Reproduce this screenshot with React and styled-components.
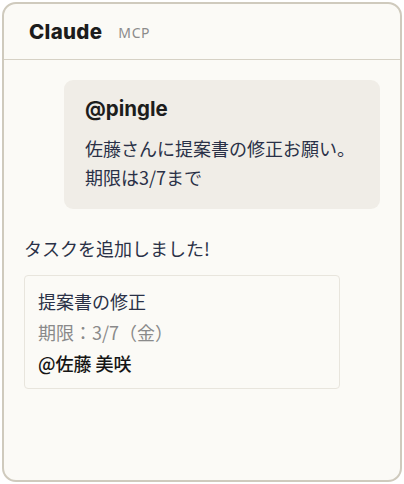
import React from 'react';
import styled, { createGlobalStyle } from 'styled-components';

const GlobalStyle = createGlobalStyle`
  html, body {
    margin: 0;
    padding: 0;
    background: #ffffff;
  }
  body {
    font-family: "Noto Sans CJK JP", "Noto Sans", sans-serif;
  }
`;

const Page = styled.div`
  padding: 2px;
`;

const Frame = styled.div`
  box-sizing: border-box;
  width: 400px;
  height: 480px;
  border: 2px solid #cfcabd;
  border-radius: 14px;
  background: #fbfaf6;
  overflow: hidden;
  display: flex;
  flex-direction: column;
`;

const Header = styled.div`
  height: 55px;
  display: flex;
  align-items: center;
  gap: 16px;
  padding: 0 25px;
  border-bottom: 1px solid #d6d1c5;
`;

const Brand = styled.span`
  font-family: Inter, "Noto Sans", sans-serif;
  font-weight: 800;
  font-size: 20.5px;
  color: #1c1c1c;
  letter-spacing: 0.3px;
`;

const Tag = styled.span`
  font-family: "Noto Sans", sans-serif;
  font-size: 14px;
  color: #8b8b8b;
  letter-spacing: 0.6px;
  padding-top: 2px;
`;

const Body = styled.div`
  display: flex;
  flex-direction: column;
  padding: 20px 20px;
`;

const Bubble = styled.div`
  align-self: flex-end;
  width: 316px;
  box-sizing: border-box;
  background: #f0ede7;
  border-radius: 9px;
  padding: 14px 20px 17px 21px;
`;

const Mention = styled.div`
  font-family: Inter, "Noto Sans", sans-serif;
  font-weight: 700;
  font-size: 20.5px;
  color: #1d1d1d;
  line-height: 30px;
  margin-bottom: 10px;
`;

const Text = styled.div`
  font-size: 18px;
  line-height: ${p => p.tall ? 31 : 29}px;
  white-space: nowrap;
  color: ${p => p.muted ? '#8a8a8a' : p.strong ? '#151515' : '#2a3147'};
  font-weight: ${p => p.strong ? 500 : 400};
`;

const Reply = styled.div`
  margin-top: 25px;
  font-size: 18px;
  line-height: 28px;
  color: #2a3147;
`;

const TaskCard = styled.div`
  margin-top: 13px;
  width: 316px;
  box-sizing: border-box;
  border: 1px solid #e8e5dd;
  border-radius: 4px;
  background: #fbfaf6;
  padding: 10px 13px 9px;
  display: flex;
  flex-direction: column;
`;

export default function App() {
  return (
    <Page>
      <GlobalStyle />
      <Frame>
        <Header>
          <Brand>Claude</Brand>
          <Tag>MCP</Tag>
        </Header>
        <Body>
          <Bubble>
            <Mention>@pingle</Mention>
            <Text>佐藤さんに提案書の修正お願い。</Text>
            <Text>期限は3/7まで</Text>
          </Bubble>
          <Reply>タスクを追加しました!</Reply>
          <TaskCard>
            <Text tall>提案書の修正</Text>
            <Text tall muted>期限：3/7（金）</Text>
            <Text tall strong>@佐藤 美咲</Text>
          </TaskCard>
        </Body>
      </Frame>
    </Page>
  );
}
